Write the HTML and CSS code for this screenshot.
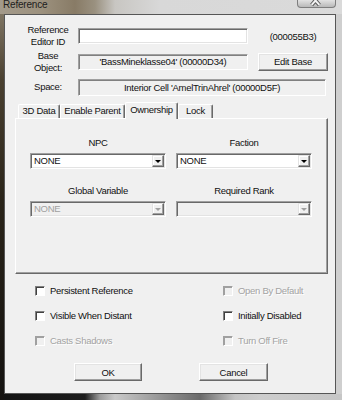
FILE: index.html
```html
<!DOCTYPE html>
<html>
<head>
<meta charset="utf-8">
<link rel="stylesheet" href="styles.css">
</head>
<body>
<div class="window">
  <header class="titlebar">
    <span class="title">Reference</span>
    <span class="close">
      <svg width="39" height="8" viewBox="0 0 39 8">
        <path d="M15 -4 L23 5 M23 -4 L15 5" stroke="#5c5c5c" stroke-width="4" fill="none"/>
        <path d="M15 -4 L23 5 M23 -4 L15 5" stroke="#f4f4f4" stroke-width="2" fill="none"/>
      </svg>
    </span>
  </header>
  <div class="body">
    <div class="client">
      <div class="top">
        <div class="lbl">Reference<br>Editor ID</div>
        <div class="edit"></div>
        <div class="formid">(000055B3)</div>
        <div class="lbl">Base<br>Object:</div>
        <div class="static">'BassMineklasse04' (00000D34)</div>
        <button class="btn btn-edit">Edit Base</button>
        <div class="lbl">Space:</div>
        <div class="static wide">Interior Cell 'AmelTrinAhrel' (00000D5F)</div>
      </div>

      <div class="tabs">
        <div class="tabstrip">
          <div class="tab t1">3D Data</div>
          <div class="tab t2">Enable Parent</div>
          <div class="tab t3 sel">Ownership</div>
          <div class="tab t4">Lock</div>
        </div>
        <div class="panel">
          <div class="fields">
            <div class="field">
              <div class="flabel">NPC</div>
              <div class="combo"><span class="ctext">NONE</span><span class="arrow"></span></div>
            </div>
            <div class="field">
              <div class="flabel">Faction</div>
              <div class="combo"><span class="ctext">NONE</span><span class="arrow"></span></div>
            </div>
            <div class="field">
              <div class="flabel">Global Variable</div>
              <div class="combo disabled"><span class="ctext">NONE</span><span class="arrow"></span></div>
            </div>
            <div class="field">
              <div class="flabel">Required Rank</div>
              <div class="combo disabled"><span class="ctext"></span><span class="arrow"></span></div>
            </div>
          </div>
        </div>
      </div>

      <div class="checks">
        <div class="check"><span class="box"></span><span>Persistent Reference</span></div>
        <div class="check off"><span class="box"></span><span>Open By Default</span></div>
        <div class="check"><span class="box"></span><span>Visible When Distant</span></div>
        <div class="check"><span class="box"></span><span>Initially Disabled</span></div>
        <div class="check off"><span class="box"></span><span>Casts Shadows</span></div>
        <div class="check off"><span class="box"></span><span>Turn Off Fire</span></div>
      </div>

      <div class="buttons">
        <button class="btn btn-ok">OK</button>
        <button class="btn btn-cancel">Cancel</button>
      </div>
    </div>
  </div>
</div>
</body>
</html>
```

FILE: styles.css
```css
html, body {
  margin: 0;
  padding: 0;
  overflow: hidden;
}

body {
  font-family: "Liberation Sans", Arial, sans-serif;
  font-size: 9.5px;
  letter-spacing: -0.3px;
  color: #111;
}

.window {
  width: 342px;
  height: 400px;
  display: flex;
  flex-direction: column;
  background:
    linear-gradient(to bottom, #8a806e 0, #4a4030 80px, #2a2419 200px, #141210 400px) left top / 4px 100% no-repeat,
    linear-gradient(to right, #121212 0, #1c1c1c 85px, #9c9c9c 100px, #c9c9c9 115px, #8a8a8a 170px, #6a6a6a 200px, #c4c4c4 235px, #cdcdcd 260px, #c6c6c6 342px) left bottom / 100% 6px no-repeat,
    #cfcfcf;
}

.titlebar {
  height: 14px;
  display: flex;
  align-items: flex-start;
  justify-content: space-between;
  background: linear-gradient(to right, #a39a8b 0, #9d927f 40px, #887b66 75px, #9a9180 95px, #c8c6c2 115px, #d8d8d8 160px, #dadada 342px);
}

.title {
  margin: 0 0 0 3px;
  font-size: 10px;
  line-height: 10px;
  letter-spacing: -0.2px;
  color: #1d1d1d;
}

.close {
  width: 39px;
  height: 8px;
  margin-right: 6px;
  box-sizing: border-box;
  border: 1px solid #7e7e7e;
  border-top: none;
  border-radius: 0 0 4px 4px;
  background: linear-gradient(to bottom, #e2e2e2, #b9b9b9);
  display: flex;
  overflow: hidden;
}

.close svg {
  margin-left: -1px;
}

.body {
  flex: 1;
  display: flex;
  padding: 0 6px 6px 4px;
}

.client {
  flex: 1;
  border: 1px solid #565656;
  background: #f0f0f0;
  display: flex;
  flex-direction: column;
}

/* top area */
.top {
  display: grid;
  grid-template-columns: 60px 180px 70px;
  grid-template-rows: 26px 25px 26px;
  padding: 8px 0 0 13px;
  align-items: center;
}

.lbl {
  text-align: center;
  line-height: 12px;
}

.edit {
  width: 170px;
  height: 16px;
  box-sizing: border-box;
  background: #fff;
  border: 1px solid;
  border-color: #a0a0a0 #fff #fff #a0a0a0;
  box-shadow: inset 1px 1px #696969, inset -1px -1px #e3e3e3;
}

.formid {
  text-align: center;
}

.static {
  width: 170px;
  height: 16px;
  box-sizing: border-box;
  border: 1px solid;
  border-color: #a0a0a0 #fff #fff #a0a0a0;
  box-shadow: inset 1px 1px #808080;
  text-align: center;
  line-height: 14px;
  white-space: nowrap;
}

.static.wide {
  grid-column: 2 / 4;
  width: 248px;
  height: 17px;
  line-height: 15px;
}

.btn {
  font: inherit;
  letter-spacing: inherit;
  color: #111;
  background: #f0f0f0;
  height: 18px;
  padding: 0;
  box-sizing: border-box;
  border: 1px solid;
  border-color: #fff #696969 #696969 #fff;
  box-shadow: inset -1px -1px #a0a0a0, inset 1px 1px #e3e3e3;
}

.btn-edit {
  width: 70px;
}

/* tabs */
.tabs {
  margin: 2px 0 0 10px;
  width: 313px;
}

.tabstrip {
  display: flex;
  align-items: flex-end;
  height: 16px;
  padding-left: 3px;
}

.tab {
  height: 14px;
  box-sizing: border-box;
  border: 1px solid #fff;
  border-bottom: none;
  border-right-color: #696969;
  border-radius: 2px 2px 0 0;
  box-shadow: inset -1px 0 #a0a0a0;
  background: #f0f0f0;
  text-align: center;
  line-height: 12px;
  white-space: nowrap;
}

.t1 { width: 42px; }
.t2 { width: 65px; }
.t3 { width: 53px; }
.t4 { width: 35px; }

.tab.sel {
  height: 17px;
  margin-bottom: -1px;
  line-height: 14px;
  z-index: 1;
}

.panel {
  height: 156px;
  box-sizing: border-box;
  border: 1px solid;
  border-color: #fff #696969 #696969 #fff;
  box-shadow: inset -1px -1px #a0a0a0;
}

.fields {
  display: grid;
  grid-template-columns: 136px 136px;
  column-gap: 10px;
  row-gap: 16px;
  padding: 18px 0 0 14px;
}

.field {
  display: flex;
  flex-direction: column;
  gap: 4px;
}

.flabel {
  text-align: center;
  line-height: 12px;
}

.combo {
  height: 16px;
  box-sizing: border-box;
  background: #fff;
  border: 1px solid;
  border-color: #a0a0a0 #fff #fff #a0a0a0;
  box-shadow: inset 1px 1px #696969, inset -1px -1px #e3e3e3;
  display: flex;
  align-items: center;
  justify-content: space-between;
  padding: 1px 1px 1px 3px;
}

.ctext {
  line-height: 12px;
}

.arrow {
  width: 12px;
  height: 12px;
  box-sizing: border-box;
  background: #f0f0f0;
  border: 1px solid;
  border-color: #e3e3e3 #696969 #696969 #e3e3e3;
  box-shadow: inset -1px -1px #a0a0a0, inset 1px 1px #fff;
  display: flex;
  align-items: center;
  justify-content: center;
}

.arrow::after {
  content: "";
  border-left: 3px solid transparent;
  border-right: 3px solid transparent;
  border-top: 3px solid #000;
  margin-top: 1px;
}

.combo.disabled {
  background: #f0f0f0;
  color: #a0a0a0;
}

.combo.disabled .arrow::after {
  border-top-color: #a0a0a0;
}

/* checkboxes */
.checks {
  display: grid;
  grid-template-columns: 188px auto;
  grid-auto-rows: 25px;
  align-items: center;
  padding-left: 30px;
  margin-top: 4px;
}

.check {
  display: flex;
  align-items: center;
  gap: 5px;
  white-space: nowrap;
}

.box {
  width: 10px;
  height: 10px;
  box-sizing: border-box;
  background: #fff;
  border: 1px solid;
  border-color: #808080 #fff #fff #808080;
  box-shadow: inset 1px 1px #404040;
}

.check.off {
  color: #a3a3a3;
  text-shadow: 1px 1px 0 #fff;
}

.check.off .box {
  background: #f0f0f0;
  border-color: #a0a0a0 #fff #fff #a0a0a0;
  box-shadow: inset 1px 1px #a0a0a0;
}

/* dialog buttons */
.buttons {
  display: flex;
  gap: 57px;
  padding-left: 69px;
  margin-top: 10px;
}

.btn-ok { width: 68px; }
.btn-cancel { width: 69px; }
```
